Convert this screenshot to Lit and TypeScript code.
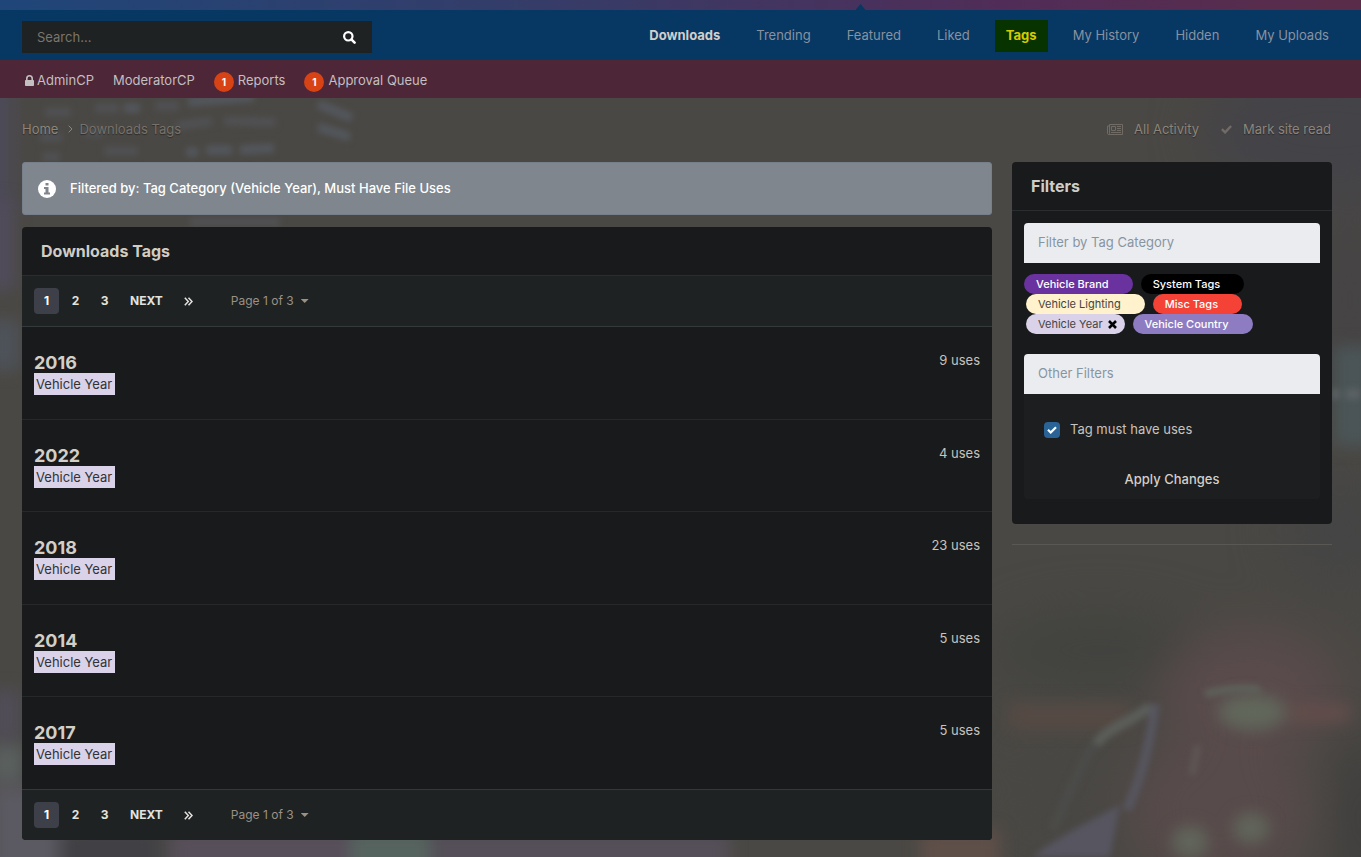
import { LitElement, html, css, svg } from "lit";
import { customElement } from "lit/decorators.js";

const lock = html`<svg class="lock" viewBox="0 0 9 11" aria-hidden="true"><path fill="currentColor" fill-rule="evenodd" d="M1 5V3.5a3.5 3.5 0 0 1 7 0V5h.3c.4 0 .7.3.7.7v4.6c0 .4-.3.7-.7.7H.7a.7.7 0 0 1-.7-.7V5.700c0-.4.3-.7.7-.7zM2.600 5h3.800V3.500a1.900 1.900 0 0 0-3.800 0z"/></svg>`;
const searchIcon = html`<svg width="13" height="13" viewBox="0 0 13 13" aria-hidden="true"><circle cx="5.300" cy="5.300" r="4.200" fill="none" stroke="currentColor" stroke-width="2.200"/><path d="M8.600 8.600l3 3" stroke="currentColor" stroke-width="2.600" stroke-linecap="round"/></svg>`;
const info = html`<svg width="18" height="18" viewBox="0 0 18 18" aria-hidden="true"><circle cx="9" cy="9" r="9" fill="#fff"/><path fill="#7f868e" d="M7.500 3h3v2.600h-3zM6 7h4.500v5.500H12v2H6v-2h1.500V9H6z"/></svg>`;
const paper = html`<svg width="16" height="11" viewBox="0 0 16 11" aria-hidden="true"><path fill="none" stroke="currentColor" d="M2.500.5h13v10H1.700C1 10.500.5 10 .5 9.300V2h2m0-1.500v9c0 .6-.3 1-.8 1M4.500 2.500h4v4h-4zM10 2.500h4M10 4.500h4M10 6.500h4M4 8.500h10"/></svg>`;
const check = html`<svg width="11" height="9" viewBox="0 0 11 9" aria-hidden="true"><path fill="none" stroke="currentColor" stroke-width="2.400" d="M.9 4.200l3.200 3.200L10.100 1"/></svg>`;

const tags = [["2016", 9], ["2022", 4], ["2018", 23], ["2014", 5], ["2017", 5]];
const nav = ["Downloads", "Trending", "Featured", "Liked", "Tags", "My History", "Hidden", "My Uploads"];

const backdrop = html`<svg class="backdrop" viewBox="0 0 1361 857" preserveAspectRatio="xMidYMid slice" aria-hidden="true">
  <defs>
    <filter id="b30" x="-150" y="-50" width="1700" height="1000" filterUnits="userSpaceOnUse" color-interpolation-filters="sRGB"><feGaussianBlur stdDeviation="24"/></filter>
    <filter id="b10" x="-150" y="-50" width="1700" height="1000" filterUnits="userSpaceOnUse" color-interpolation-filters="sRGB"><feGaussianBlur stdDeviation="8"/></filter>
    <filter id="b4" x="-150" y="-50" width="1700" height="1000" filterUnits="userSpaceOnUse" color-interpolation-filters="sRGB"><feGaussianBlur stdDeviation="3"/></filter>
    <linearGradient id="edge"><stop offset="0" stop-color="#4c4a57"/><stop offset="1" stop-color="#4a4844"/></linearGradient>
  </defs>
  <rect width="1361" height="857" fill="#4a4844"/>
  <rect y="90" width="26" height="120" fill="url(#edge)"/>
  ${svg`
  <g filter="url(#b30)">
    <ellipse cx="1330" cy="130" rx="130" ry="70" fill="#444348"/>
    <ellipse cx="1350" cy="300" rx="30" ry="90" fill="#454345"/>
    <ellipse cx="1340" cy="530" rx="60" ry="60" fill="#454545"/>
    <ellipse cx="1100" cy="650" rx="110" ry="40" fill="#42433f"/>
    <ellipse cx="1250" cy="690" rx="90" ry="60" fill="#5a4b4c"/>
    <ellipse cx="1220" cy="810" rx="90" ry="80" fill="#584b4b"/>
    <ellipse cx="1362" cy="820" rx="18" ry="90" fill="#3b3a3a"/>
    <ellipse cx="1050" cy="790" rx="30" ry="40" fill="#484744"/>
  </g>
  <g filter="url(#b10)">
    <path d="M-10 200h24v90h-24z" fill="#514c5c"/>
    <path d="M-10 320h28v50h-28z" fill="#4e535b"/>
    <path d="M-10 690h30v50h-30z" fill="#504d58"/>
    <path d="M-10 745h34v36h-34z" fill="#5a605f"/>
    <path d="M-10 785h80v90h-80z" fill="#5b5961"/>
    <path d="M60 830h100v50h-100z" fill="#414145"/>
    <path d="M170 830h180v50h-180z" fill="#574f5a"/>
    <path d="M350 830h80v50h-80z" fill="#56645f"/>
    <path d="M430 830h300v50h-300z" fill="#544f58"/>
    <path d="M920 830h80v50h-80z" fill="#5f4f49"/>
    <path d="M1334 346h40v100h-40z" fill="#4b5557"/>
    <ellipse cx="1252" cy="712" rx="34" ry="18" fill="#61675b"/>
    <ellipse cx="1190" cy="842" rx="18" ry="16" fill="#61665b"/>
    <ellipse cx="1251" cy="828" rx="18" ry="15" fill="#61665b"/>
    <path d="M1010 703h120v26h-120z" fill="#564a44"/>
    <path d="M1290 704h60v18h-60z" fill="#634e4b"/>
  </g>
  <g filter="url(#b4)">
    <path d="M1032 857c26-20 54-34 88-52l-10 52z" fill="#575560"/>
    <path d="M1052 830c18-36 30-70 44-88" fill="none" stroke="#4b4b49" stroke-width="10"/>
    <path d="M1096 744c16-20 34-20 54-38" fill="none" stroke="#5b5e5a" stroke-width="10"/>
    <path d="M1155 704c-4 36-12 70-28 106" fill="none" stroke="#575660" stroke-width="9"/>
    <path d="M1205 694c20-5 35-7 55-4" fill="none" stroke="#5e615a" stroke-width="8"/>
    <path d="M1198 745l-6 30" stroke="#5e5655" stroke-width="7"/>
    <path d="M1332 394h8M1346 394h14" stroke="#5c6265" stroke-width="10"/>
  </g>
  <g filter="url(#b4)" fill="none" stroke="#53575d" stroke-width="9">
    <path d="M124 108h16M188 102l66-5M318 104l34 14M318 127l32 10M186 152h12M206 150h26M240 150l34-2"/>
    <path stroke="#505154" d="M45 112h26M95 108h24M155 106h24M176 126l36-5M224 121l52 1M40 137h22M84 132h20M42 157h18M104 151h34M190 222h90"/>
  </g>`}
</svg>`;

@customElement("app-root")
export class AppRoot extends LitElement {
  static styles = css`
    :host { display: grid; min-height: 100vh; font: 13px/20px Inter, sans-serif; color: #c8c3bc; }
    * { box-sizing: border-box; }
    a { color: inherit; text-decoration: none; }
    button, input, select { font: inherit; color: inherit; }
    button { border: 0; padding: 0; background: none; cursor: pointer; }
    h1, h2, h3, ul, p { margin: 0; padding: 0; list-style: none; }
    .backdrop { grid-area: 1 / 1; width: 100%; height: 0; min-height: 100%; display: block; }
    .page { grid-area: 1 / 1; z-index: 1; min-width: 0; }
    .strip { height: 10px; display: flex; align-items: flex-end; background: linear-gradient(90deg, #1f4679, #383b66 44%, #502d58 74%, #5a2c49); }
    .caret { width: 10px; height: 6px; margin-left: calc(63.3% - 6px); background: #073763; clip-path: polygon(50% 0, 100% 100%, 0 100%); }
    .nav { display: flex; justify-content: space-between; align-items: center; height: 50px; padding: 0 21px 0 22px; background: #073763; }
    .search { display: flex; align-items: center; width: 350px; height: 32px; margin-top: 4px; background: #1e2223; }
    .search input { flex: 1; min-width: 0; border: 0; background: none; padding: 0 15px; outline: 0; }
    .search input::placeholder { color: #7a756d; opacity: 1; }
    .search button { display: flex; color: #fff; padding: 0 16px; }
    .links { display: flex; gap: 14px; margin-top: 1px; }
    .links a { padding: 5px 11px 7px; color: #8792a0; }
    .links .strong { font-weight: 700; color: #d3cfc9; }
    .links .hot { font-weight: 700; color: #d5cb00; background: #063300; }
    .admin { display: flex; align-items: center; gap: 19px; height: 38px; padding: 2px 25px 0; background: #4d2637; color: #c4bfc0; }
    .admin a { display: flex; align-items: center; }
    .lock { width: 9px; height: 11px; margin-right: 3px; }
    .badge { width: 20px; height: 20px; margin: 3px 4px 0 0; border-radius: 50%; background: #d84315; color: #fff; font-size: 10px; font-weight: 700; text-align: center; }
    .crumbs { display: flex; justify-content: space-between; align-items: center; height: 64px; padding: 0 30px 2px 22px; color: #8d857b; text-shadow: 0 1px 1px #0006; }
    .crumbs div { display: flex; align-items: center; }
    .crumbs .here { color: #77716a; }
    .chev { width: 5px; height: 8px; margin: 0 6px 0 10px; }
    .actions { gap: 22px; }
    .actions a { display: flex; align-items: center; gap: 11px; }
    .actions svg { color: #706b65; }
    .columns { display: grid; grid-template-columns: minmax(0, 1fr) 320px; gap: 20px; align-items: start; padding: 0 29px 17px 22px; }
    .notice { display: flex; align-items: center; gap: 14px; height: 53px; padding: 0 15px; margin-bottom: 12px; border: 1px solid #777f8b; border-radius: 3px; background: #7f868e; color: #fff; font-weight: 500; }
    .notice span { padding-bottom: 2px; }
    .panel { background: #191a1c; border-radius: 4px; overflow: hidden; }
    .title { height: 49px; padding: 14px 19px; border-bottom: 1px solid #2a2d2f; font-size: 16px; font-weight: 700; color: #d0ccc6; }
    .pager { display: flex; align-items: center; height: 51px; padding: 0 12px; background: #1e2223; font-size: 12px; font-weight: 700; color: #e4e2df; border-bottom: 1px solid #34393b; }
    .pager.last { height: 50px; border-bottom: 0; }
    .pager a { height: 26px; min-width: 25px; padding: 0 8px; margin-right: 4px; border-radius: 4px; display: flex; align-items: center; justify-content: center; }
    .pager .on { background: #3d4048; color: #fff; }
    .pager .next { padding: 0 9px; }
    .pager button { display: flex; align-items: center; gap: 7px; margin-left: 26px; font-size: 12px; font-weight: 400; color: #9a9184; }
    .tri { width: 8px; height: 4px; background: currentColor; clip-path: polygon(0 0, 100% 0, 50% 100%); }
    .rows { display: grid; grid-auto-rows: 1fr; min-height: 463px; }
    .row { display: flex; justify-content: space-between; align-items: flex-start; padding: 23px 12px; border-bottom: 1px solid #26292b; }
    .row:last-child { border-color: #34393b; }
    .row h3 { padding-top: 3px; font-size: 18px; line-height: 20px; font-weight: 700; color: #d3cec6; }
    .label { display: block; width: max-content; padding: 1px 3px 1px 2px; background: #d9d2e9; color: #333; line-height: 20px; }
    .filters { padding: 12px 12px 25px; }
    .legend { height: 40px; padding: 9px 14px; background: #ebecf0; color: #8795a1; border-radius: 4px 4px 0 0; }
    .chips { display: flex; flex-wrap: wrap; column-gap: 8px; padding: 11px 60px 20px 0; }
    .chip { height: 20px; border-radius: 10px; padding: 0 24px 0 12px; font-size: 11px; font-weight: 500; line-height: 20px; color: #fff; }
    .purple { background: #6a329f; } .black { background: #000; } .red { background: #f44336; } .violet { background: #8e7cc3; }
    .cream { background: #fff2cc; color: #444; font-weight: 400; margin-left: 2px; }
    .lilac { background: #d9d2e9; color: #444; font-weight: 400; padding-right: 8px; margin-left: 2px; display: flex; align-items: center; gap: 5px; }
    .uses { display: flex; align-items: center; gap: 10px; height: 66px; padding: 5px 20px 0; background: #1d1e20; }
    .uses span { padding-bottom: 2px; }
    .uses input { appearance: none; width: 16px; height: 16px; margin: 0; border-radius: 4px; background: #2a6496 center / 10px no-repeat url("data:image/svg+xml,%3Csvg xmlns='http://www.w3.org/2000/svg' viewBox='0 0 10 8'%3E%3Cpath d='M1 3.800l2.700 2.700L9 1.200' fill='none' stroke='white' stroke-width='2.200'/%3E%3C/svg%3E"); }
    .apply { display: block; width: 100%; height: 39px; padding-bottom: 2px; background: #1d1e20; border-radius: 0 0 4px 4px; font-weight: 500; color: #d3cfc9; }
    .rule { height: 1px; margin-top: 20px; background: #595855; }
  `;

  pager(last: boolean) {
    return html`<nav class="pager ${last ? "last" : ""}" aria-label="Pagination">
      <a class="on" href="#">1</a><a href="#">2</a><a href="#">3</a><a class="next" href="#">NEXT</a>
      <a href="#" aria-label="Last page"><svg width="9" height="9" viewBox="0 0 9 9"><path d="M.8.700l3.500 3.800L.8 8.300M4.500.700L8 4.500 4.500 8.300" fill="none" stroke="currentColor" stroke-width="1.500"/></svg></a>
      <button>Page 1 of 3 <span class="tri"></span></button>
    </nav>`;
  }

  render() {
    return html`${backdrop}
      <div class="page">
        <div class="strip"><span class="caret"></span></div>
        <header class="nav">
          <form class="search" role="search"><input type="search" aria-label="Search" placeholder="Search..."><button type="button" aria-label="Search">${searchIcon}</button></form>
          <nav class="links">${nav.map((n) => html`<a href="#" class=${n === "Downloads" ? "strong" : n === "Tags" ? "hot" : ""}>${n}</a>`)}</nav>
        </header>
        <nav class="admin">
          <a href="#">${lock}AdminCP</a><a href="#">ModeratorCP</a>
          <a href="#"><span class="badge">1</span>Reports</a><a href="#"><span class="badge">1</span>Approval Queue</a>
        </nav>
        <div class="crumbs">
          <div><a href="#">Home</a><svg class="chev" viewBox="0 0 5 8"><path d="M.7.700L4 4 .7 7.300" fill="none" stroke="currentColor"/></svg><span class="here">Downloads Tags</span></div>
          <div class="actions"><a href="#">${paper}All Activity</a><a href="#">${check}Mark site read</a></div>
        </div>
        <div class="columns">
          <main>
            <p class="notice">${info}<span>Filtered by: Tag Category (Vehicle Year), Must Have File Uses</span></p>
            <section class="panel">
              <h1 class="title">Downloads Tags</h1>
              ${this.pager(false)}
              <ul class="rows">${tags.map(([y, n]) => html`<li class="row"><div><h3><a href="#">${y}</a></h3><a class="label" href="#">Vehicle Year</a></div><span>${n} uses</span></li>`)}</ul>
              ${this.pager(true)}
            </section>
          </main>
          <aside>
            <section class="panel">
              <h2 class="title">Filters</h2>
              <div class="filters">
                <div class="legend">Filter by Tag Category</div>
                <div class="chips">
                  <a href="#" class="chip purple">Vehicle Brand</a><a href="#" class="chip black">System Tags</a>
                  <a href="#" class="chip cream">Vehicle Lighting</a><a href="#" class="chip red">Misc Tags</a>
                  <a href="#" class="chip lilac">Vehicle Year<svg width="9" height="9" viewBox="0 0 9 9"><path d="M1 1l7 7M8 1L1 8" stroke="#000" stroke-width="2.600"/></svg></a><a href="#" class="chip violet">Vehicle Country</a>
                </div>
                <div class="legend">Other Filters</div>
                <label class="uses"><input type="checkbox" checked><span>Tag must have uses</span></label>
                <button class="apply">Apply Changes</button>
              </div>
            </section>
            <div class="rule"></div>
          </aside>
        </div>
      </div>`;
  }
}
